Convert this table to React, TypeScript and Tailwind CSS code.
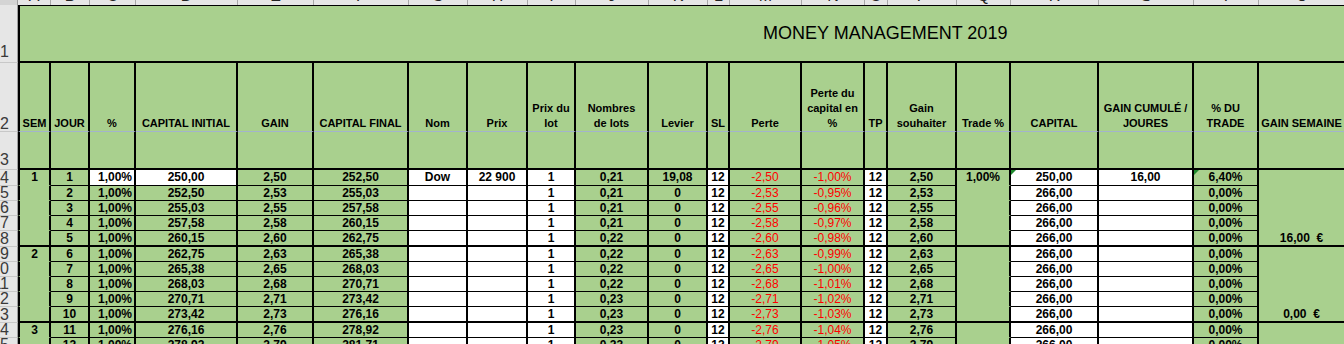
const FONT = "font-['Liberation_Sans',Arial,sans-serif]";

type Col = {
  w: string;
  head: string[];
  letter: string;
  white?: "all" | "first";
  red?: boolean;
  right?: boolean;
  open?: boolean;
  mark?: boolean;
  thin?: boolean;
};

const cols: Col[] = [
  { w: "w-[33px] border-l-2 border-l-black", head: ["SEM"], letter: "A", open: true },
  { w: "w-[39px]", head: ["JOUR"], letter: "B" },
  { w: "w-[46px]", head: ["%"], letter: "C", white: "first", right: true },
  { w: "w-[102px]", head: ["CAPITAL INITIAL"], letter: "D", white: "first" },
  { w: "w-[76px]", head: ["GAIN"], letter: "E" },
  { w: "w-[95px]", head: ["CAPITAL FINAL"], letter: "F" },
  { w: "w-[59px]", head: ["Nom"], letter: "G", white: "all" },
  { w: "w-[60px]", head: ["Prix"], letter: "H", white: "all" },
  { w: "w-[48px]", head: ["Prix du", "lot"], letter: "I", white: "all" },
  { w: "w-[73px]", head: ["Nombres", "de lots"], letter: "J" },
  { w: "w-[59px]", head: ["Levier"], letter: "K" },
  { w: "w-[22px]", head: ["SL"], letter: "L", white: "all" },
  { w: "w-[72px]", head: ["Perte"], letter: "M", red: true },
  { w: "w-[63px]", head: ["Perte du", "capital en", "%"], letter: "N", red: true },
  { w: "w-[23px]", head: ["TP"], letter: "O", white: "all" },
  { w: "w-[69px]", head: ["Gain", "souhaiter"], letter: "P" },
  { w: "w-[54px]", head: ["Trade %"], letter: "Q", open: true },
  { w: "w-[88px]", head: ["CAPITAL"], letter: "R", white: "all", mark: true },
  { w: "w-[95px]", head: ["GAIN CUMULÉ /", "JOURES"], letter: "S", white: "all" },
  { w: "w-[65px]", head: ["% DU", "TRADE"], letter: "T", mark: true },
  { w: "w-[87px]", head: ["GAIN SEMAINE"], letter: "U", open: true },
];

const days: string[][] = [
  ["1", "1", "1,00%", "250,00", "2,50", "252,50", "Dow", "22 900", "1", "0,21", "19,08", "12", "-2,50", "-1,00%", "12", "2,50", "1,00%", "250,00", "16,00", "6,40%", ""],
  ["", "2", "1,00%", "252,50", "2,53", "255,03", "", "", "1", "0,21", "0", "12", "-2,53", "-0,95%", "12", "2,53", "", "266,00", "", "0,00%", ""],
  ["", "3", "1,00%", "255,03", "2,55", "257,58", "", "", "1", "0,21", "0", "12", "-2,55", "-0,96%", "12", "2,55", "", "266,00", "", "0,00%", ""],
  ["", "4", "1,00%", "257,58", "2,58", "260,15", "", "", "1", "0,21", "0", "12", "-2,58", "-0,97%", "12", "2,58", "", "266,00", "", "0,00%", ""],
  ["", "5", "1,00%", "260,15", "2,60", "262,75", "", "", "1", "0,22", "0", "12", "-2,60", "-0,98%", "12", "2,60", "", "266,00", "", "0,00%", "16,00\u00a0\u00a0€"],
  ["2", "6", "1,00%", "262,75", "2,63", "265,38", "", "", "1", "0,22", "0", "12", "-2,63", "-0,99%", "12", "2,63", "", "266,00", "", "0,00%", ""],
  ["", "7", "1,00%", "265,38", "2,65", "268,03", "", "", "1", "0,22", "0", "12", "-2,65", "-1,00%", "12", "2,65", "", "266,00", "", "0,00%", ""],
  ["", "8", "1,00%", "268,03", "2,68", "270,71", "", "", "1", "0,22", "0", "12", "-2,68", "-1,01%", "12", "2,68", "", "266,00", "", "0,00%", ""],
  ["", "9", "1,00%", "270,71", "2,71", "273,42", "", "", "1", "0,23", "0", "12", "-2,71", "-1,02%", "12", "2,71", "", "266,00", "", "0,00%", ""],
  ["", "10", "1,00%", "273,42", "2,73", "276,16", "", "", "1", "0,23", "0", "12", "-2,73", "-1,03%", "12", "2,73", "", "266,00", "", "0,00%", "0,00\u00a0\u00a0€"],
  ["3", "11", "1,00%", "276,16", "2,76", "278,92", "", "", "1", "0,23", "0", "12", "-2,76", "-1,04%", "12", "2,76", "", "266,00", "", "0,00%", ""],
  ["", "12", "1,00%", "278,92", "2,79", "281,71", "", "", "1", "0,23", "0", "12", "-2,79", "-1,05%", "12", "2,79", "", "266,00", "", "0,00%", ""],
];

function RowHead({ n, h, pb }: { n: string; h: string; pb: string }) {
  return (
    <div className={`${h} ${pb} w-[18px] shrink-0 bg-[#e6e6e6] border-r border-r-[#9f9f9f] border-b border-b-[#c8c8c8] flex items-end justify-end overflow-hidden pr-[8px] text-[16px] leading-[15px] text-[#3a3a3a]`}>
      <span className="whitespace-nowrap">{n}</span>
    </div>
  );
}

export default function App() {
  return (
    <div className={`w-[1344px] h-[344px] overflow-hidden bg-white ${FONT}`}>
      {/* column letters strip */}
      <div className="flex w-max h-[5px] bg-[#e6e6e6] overflow-hidden">
        <div className="w-[18px] shrink-0 bg-[#d4d4d4] border-r border-r-[#9f9f9f]" />
        {cols.map((c, i) => (
          <div key={i} className={`${c.w.split(" ")[0]} shrink-0 border-r border-r-[#a8a8a8] flex justify-center items-start overflow-hidden`}>
            <span className="text-[16px] leading-[16px] text-[#222] -translate-y-[12px]">{c.letter}</span>
          </div>
        ))}
      </div>

      {/* title row */}
      <div className="flex w-max h-[58px]">
        <RowHead n="1" h="h-[58px]" pb="pb-[3px]" />
        <div className="w-[1328px] shrink-0 border-t border-t-black border-l-2 border-l-black border-b-2 border-b-black bg-[#a9d08e] flex items-center pl-[743px] pb-[1px]">
          <span className="text-[18px] text-black whitespace-nowrap">MONEY MANAGEMENT 2019</span>
        </div>
      </div>

      {/* header rows 2 and 3 */}
      <div className="flex w-max h-[69px]">
        <RowHead n="2" h="h-[69px]" pb="pb-0" />
        {cols.map((c, i) => (
          <div key={i} className={`${c.w} shrink-0 h-full bg-[#a9d08e] border-r-2 border-r-black border-b border-b-[#a3b3cd] flex flex-col justify-end items-center text-[11px] font-bold leading-[15px] text-black text-center`}>
            {c.head.map((l, j) => (
              <div key={j} className="whitespace-nowrap">{l}</div>
            ))}
          </div>
        ))}
      </div>
      <div className="flex w-max h-[38px]">
        <RowHead n="3" h="h-[38px]" pb="pb-[2px]" />
        {cols.map((c, i) => (
          <div key={i} className={`${c.w} shrink-0 h-full bg-[#a9d08e] border-r-2 border-r-black border-b-2 border-b-black`} />
        ))}
      </div>

      {/* data rows */}
      {days.map((d, r) => {
        const weekEnd = r === 4 || r === 9;
        const h = weekEnd ? "h-[16px]" : r === 0 ? "h-[16px]" : "h-[15px]";
        return (
          <div key={r} className={`flex w-max ${h}`}>
            <RowHead n={String(r + 4)} h={h} pb="pb-0" />
            {cols.map((c, i) => {
              const white = c.white === "all" || (c.white === "first" && r === 0);
              const bottom = weekEnd
                ? "border-b-2 border-b-black"
                : c.open
                ? "border-b border-b-[#a9d08e]"
                : "border-b border-b-black";
              const weight = c.red ? "font-normal text-[#ff0000]" : "font-bold text-black";
              const align = c.right ? "justify-end pr-[2px]" : "justify-center";
              return (
                <div
                  key={i}
                  className={`${c.w} relative shrink-0 h-full border-r-2 border-r-black ${bottom} ${white ? "bg-white" : "bg-[#a9d08e]"} flex items-start ${align} text-[12px] leading-[14px] whitespace-nowrap ${weight}`}
                >
                  {c.mark && r === 0 && (
                    <span className="absolute left-0 top-0 w-0 h-0 border-t-[5px] border-t-[#1f8a2e] border-r-[5px] border-r-transparent" />
                  )}
                  {d[i]}
                </div>
              );
            })}
          </div>
        );
      })}
    </div>
  );
}
